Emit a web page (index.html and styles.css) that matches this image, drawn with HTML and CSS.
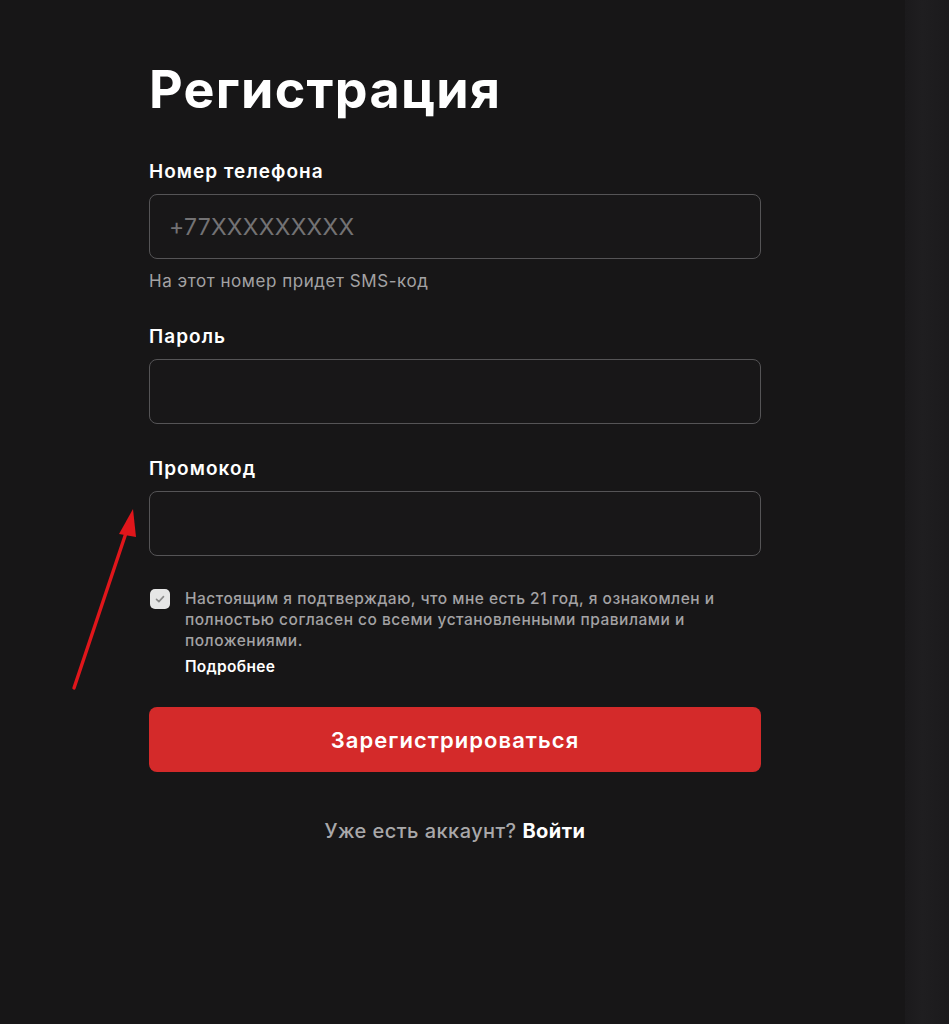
FILE: index.html
```html
<!DOCTYPE html>
<html lang="ru">
<head>
<meta charset="utf-8">
<link rel="stylesheet" href="styles.css">
</head>
<body>
<div class="page">
  <div class="edge"></div>
  <form class="form">
    <h1 class="title">Регистрация</h1>
    <div class="field">
      <label class="label">Номер телефона</label>
      <div class="input"><span class="placeholder">+77XXXXXXXXX</span></div>
      <div class="hint">На этот номер придет SMS-код</div>
    </div>
    <div class="field">
      <label class="label">Пароль</label>
      <div class="input"></div>
    </div>
    <div class="field">
      <label class="label">Промокод</label>
      <div class="input"></div>
    </div>
    <div class="agree">
      <span class="check">
        <svg viewBox="0 0 20 20" width="20" height="20"><path d="M6.5 10.3l2.4 2.3 4.6-5" fill="none" stroke="#8a8a8a" stroke-width="1.6" stroke-linecap="round" stroke-linejoin="round"/></svg>
      </span>
      <div class="agree-text">
        <p>Настоящим я подтверждаю, что мне есть 21 год, я ознакомлен и полностью согласен со всеми установленными правилами и положениями.</p>
        <a class="more">Подробнее</a>
      </div>
    </div>
    <button type="button" class="submit">Зарегистрироваться</button>
    <div class="login">Уже есть аккаунт? <b>Войти</b></div>
  </form>
  <svg class="arrow" viewBox="0 0 949 1024" width="949" height="1024">
    <line x1="74" y1="688" x2="127" y2="530" stroke="#e0161b" stroke-width="3.4" stroke-linecap="round"/>
    <polygon points="133,509 119,534 136,537" fill="#e0161b"/>
  </svg>
</div>
</body>
</html>
```
FILE: styles.css
```css
* { box-sizing: border-box; }
html, body { margin: 0; padding: 0; }
body {
  background: #171617;
  font-family: Inter, "Noto Sans", sans-serif;
  color: #fff;
  width: 949px;
  height: 1024px;
  overflow: hidden;
}
.page {
  position: relative;
  width: 949px;
  height: 1024px;
  padding-left: 149px;
  padding-top: 54px;
}
.edge {
  position: absolute;
  top: 0; right: 0;
  width: 44px;
  height: 1024px;
  background: linear-gradient(90deg, #1b1a1c, #1f1e20 40%, #1b1a1c);
}
.form {
  width: 612px;
  display: flex;
  flex-direction: column;
}
.title {
  margin: 0;
  font-size: 52px;
  font-weight: 700;
  line-height: 72px;
  letter-spacing: 1.3px;
}
.field {
  display: flex;
  flex-direction: column;
  margin-top: 33px;
}
.field:first-of-type { margin-top: 34px; }
.label {
  font-size: 19px;
  font-weight: 600;
  line-height: 24px;
  margin-bottom: 10px;
  letter-spacing: 1.05px;
}
.input {
  height: 65px;
  border: 1px solid #555456;
  border-radius: 8px;
  background: #181718;
  display: flex;
  align-items: center;
  padding-left: 19px;
}
.placeholder {
  font-size: 23px;
  color: #737274;
  letter-spacing: 0.25px;
}
.hint {
  font-size: 17px;
  color: #a3a2a4;
  margin-top: 11px;
  line-height: 22px;
  letter-spacing: 0.55px;
}
.agree {
  display: flex;
  gap: 15px;
  margin-top: 32px;
  padding-left: 1px;
}
.check {
  flex: none;
  width: 20px;
  height: 20px;
  border-radius: 5px;
  background: #e6e6e6;
  display: flex;
  margin-top: 1px;
}
.agree-text { flex: 1; padding-right: 20px; }
.agree-text p {
  margin: 0;
  font-size: 15.5px;
  line-height: 21px;
  color: #a3a2a4;
  font-weight: 500;
  letter-spacing: 0.5px;
}
.more {
  display: block;
  margin-top: 6px;
  font-size: 15.5px;
  font-weight: 600;
  color: #fff;
  line-height: 20px;
  letter-spacing: 0.3px;
}
.submit {
  margin-top: 30px;
  height: 65px;
  border: none;
  border-radius: 8px;
  background: #d42a2a;
  color: #fff;
  font-family: inherit;
  font-size: 22px;
  font-weight: 600;
  letter-spacing: 1.05px;
}
.login {
  margin-top: 47px;
  text-align: center;
  font-size: 20px;
  line-height: 24px;
  color: #a9a8aa;
  font-weight: 500;
  letter-spacing: 0.45px;
}
.login b { color: #fff; font-weight: 700; }
.arrow {
  position: absolute;
  left: 0; top: 0;
  pointer-events: none;
}
```
